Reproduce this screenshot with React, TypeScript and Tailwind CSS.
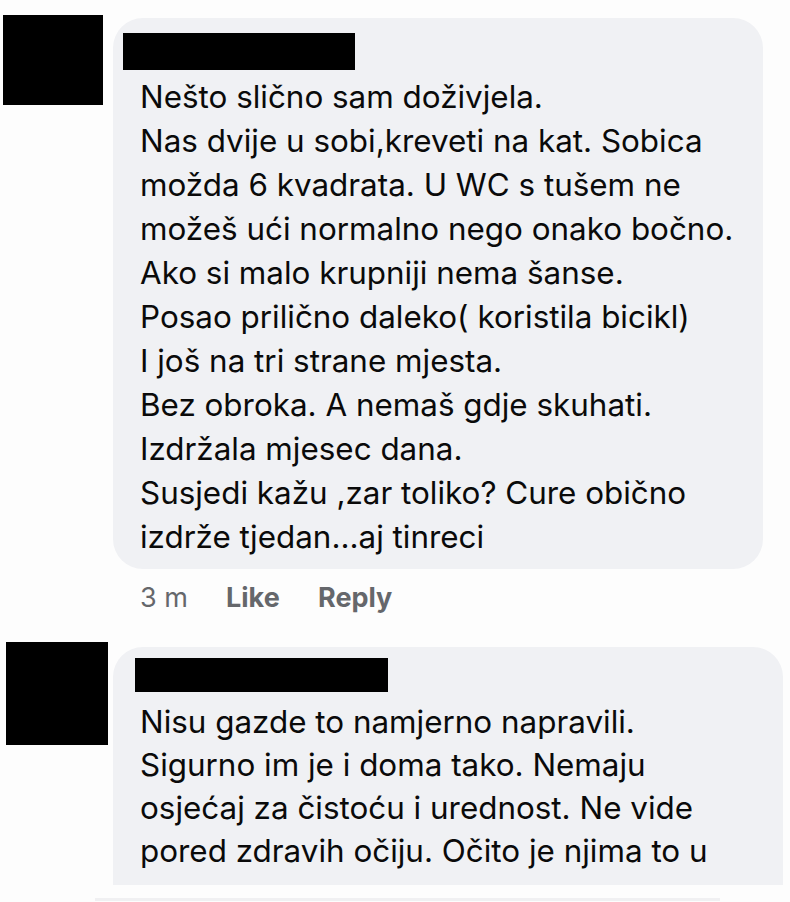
const first = [
  'Nešto slično sam doživjela.',
  'Nas dvije u sobi,kreveti na kat. Sobica',
  'možda 6 kvadrata. U WC s tušem ne',
  'možeš ući normalno nego onako bočno.',
  'Ako si malo krupniji nema šanse.',
  'Posao prilično daleko( koristila bicikl)',
  'I još na tri strane mjesta.',
  'Bez obroka. A nemaš gdje skuhati.',
  'Izdržala mjesec dana.',
  'Susjedi kažu ,zar toliko? Cure obično',
  'izdrže tjedan...aj tinreci',
];

const second = [
  'Nisu gazde to namjerno napravili.',
  'Sigurno im je i doma tako. Nemaju',
  'osjećaj za čistoću i urednost. Ne vide',
  'pored zdravih očiju. Očito je njima to u',
];

export default function App() {
  return (
    <div
      className="h-[902px] w-[790px] overflow-hidden bg-[#fdfdfd] text-[#0a0a0a]"
      style={{ fontFamily: 'Inter, "Liberation Sans", Arial, sans-serif' }}
    >
      {/* first comment */}
      <div className="flex pl-[3px] pt-[15px]">
        <div className="h-[90px] w-[100px] shrink-0 bg-black" />
        <div className="ml-[10px]">
          <div className="mt-[3px] w-[650px] rounded-[30px] bg-[#f0f1f4] pb-[10px] pt-[15px]">
            <div className="ml-[10px] h-[37px] w-[232px] bg-black" />
            <div className="mt-[5px] pl-[27px] text-[31.4px] leading-[44px]">
              {first.map((line) => (
                <div key={line} className="whitespace-nowrap">{line}</div>
              ))}
            </div>
          </div>
          <div className="mt-[12px] flex items-center pl-[27px] text-[27px] leading-[34px] text-[#65676b]">
            <span className="w-[86px]">3 m</span>
            <span className="w-[92px] font-bold">Like</span>
            <span className="font-bold">Reply</span>
          </div>
        </div>
      </div>

      {/* second comment */}
      <div className="mt-[27px] flex pl-[6px]">
        <div className="h-[103px] w-[102px] shrink-0 bg-black" />
        <div className="ml-[5px] mt-[5px] h-[238px] w-[670px] overflow-hidden rounded-t-[30px] bg-[#f0f1f4] pt-[11px]">
          <div className="ml-[22px] h-[34px] w-[253px] bg-black" />
          <div className="mt-[9px] pl-[27px] text-[31.4px] leading-[43px]">
            {second.map((line) => (
              <div key={line} className="whitespace-nowrap">{line}</div>
            ))}
          </div>
        </div>
      </div>
      <div className="ml-[95px] mt-[13px] h-[3px] w-[625px] bg-[#f0f0f2]" />
    </div>
  );
}
